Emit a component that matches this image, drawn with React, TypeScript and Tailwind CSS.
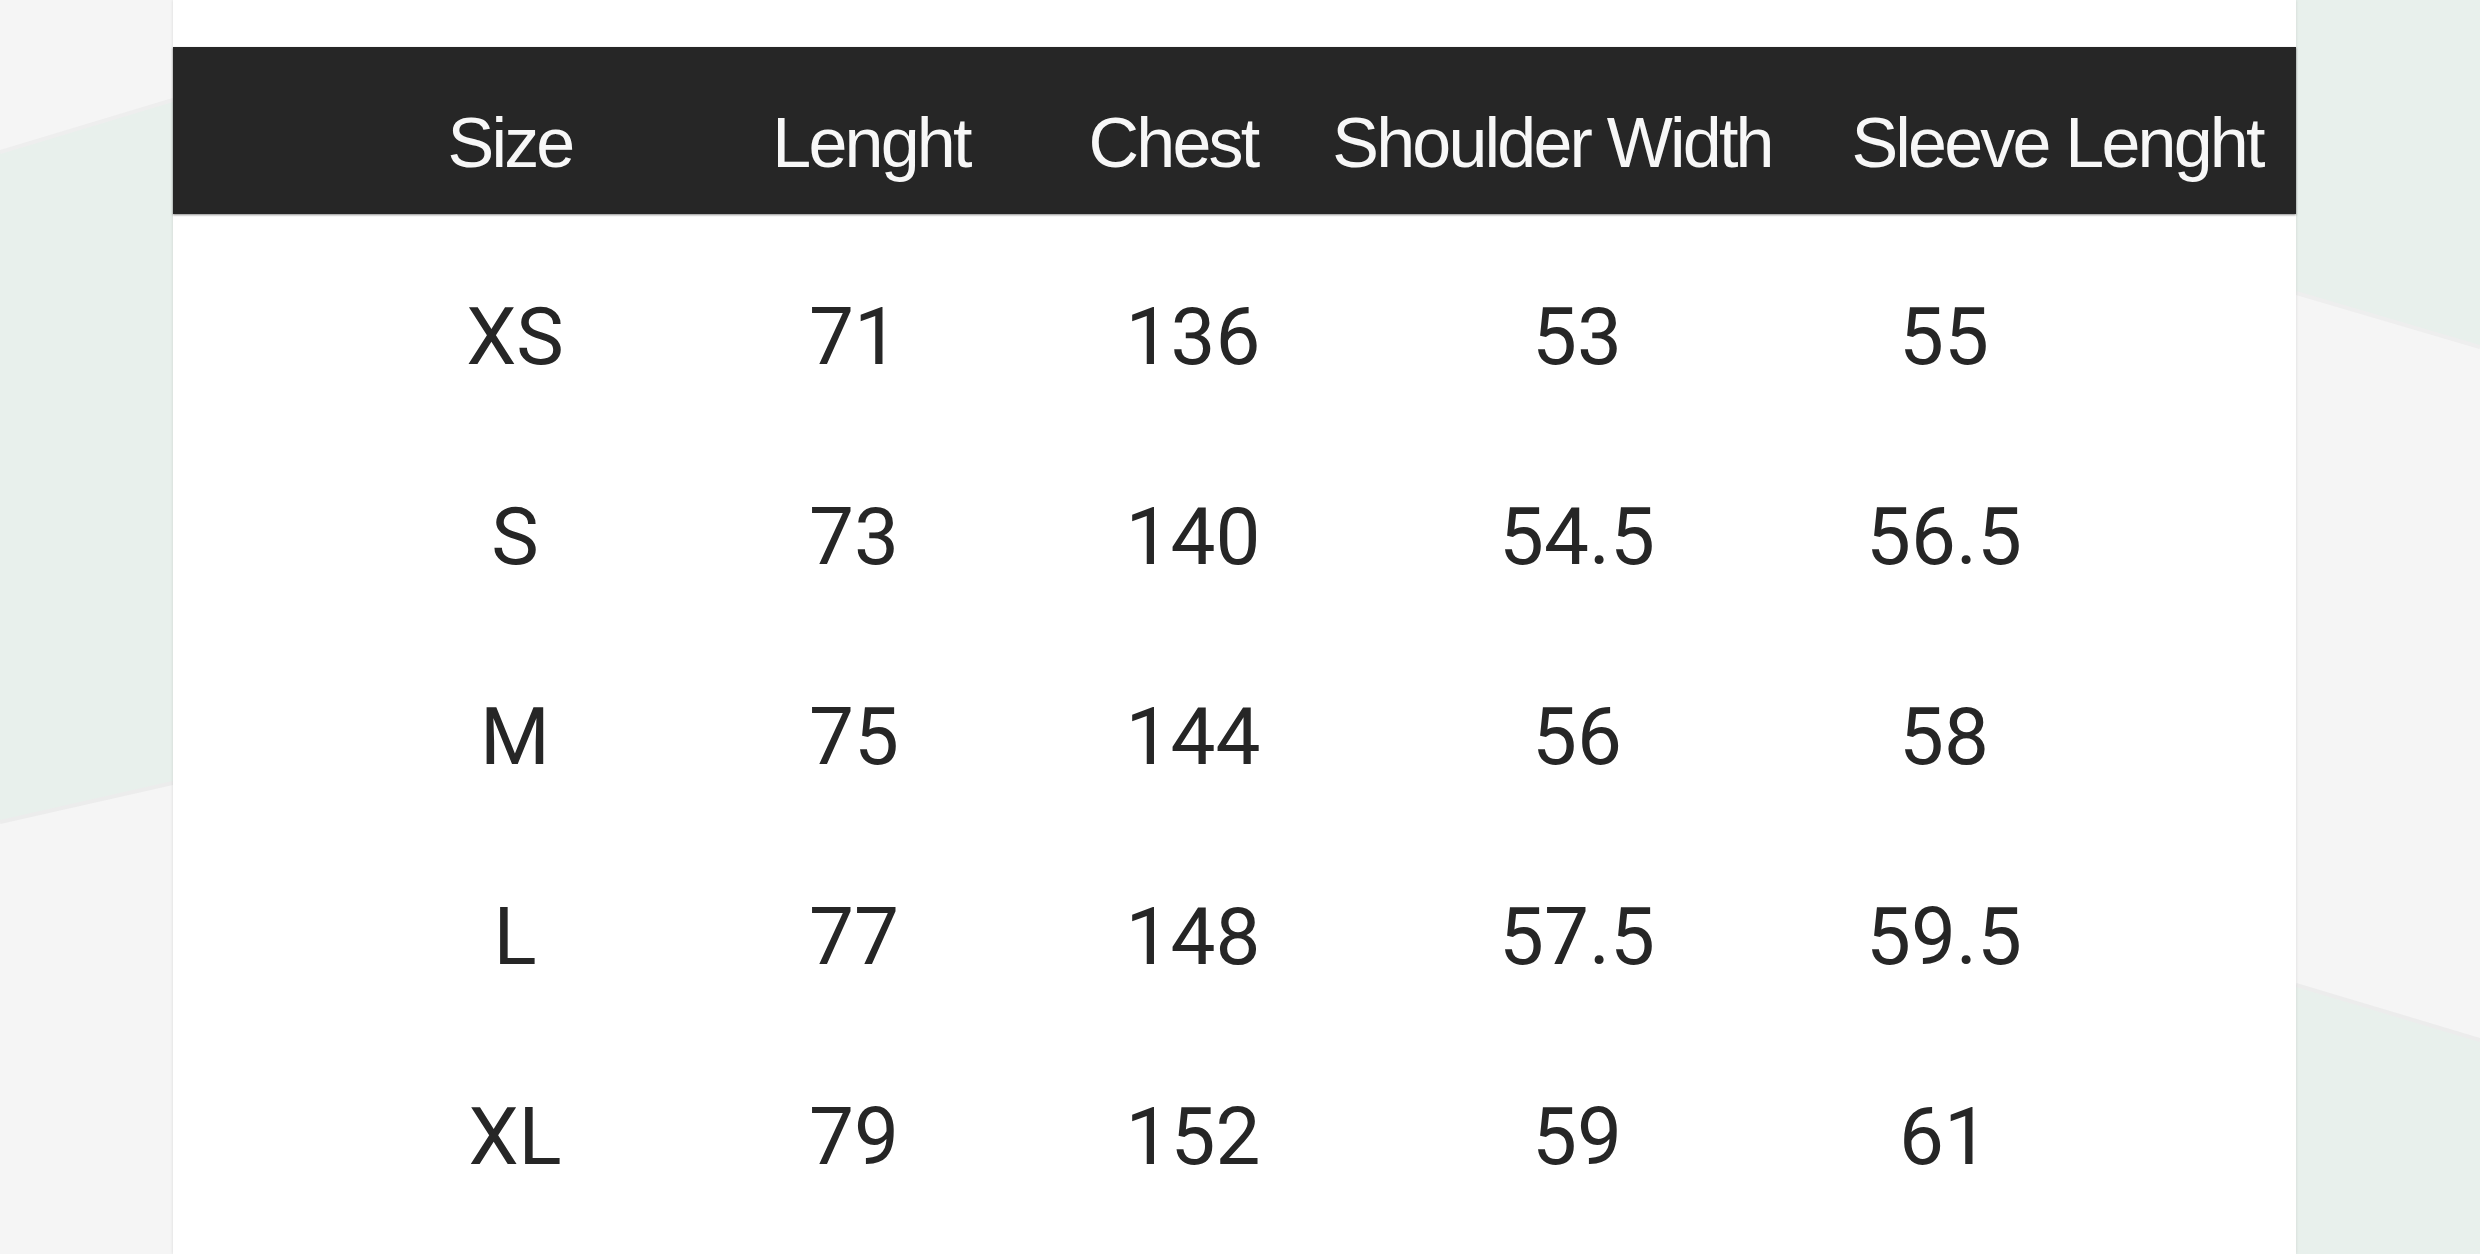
const headers = ["Size", "Lenght", "Chest", "Shoulder Width", "Sleeve Lenght"];

const rows = [
  ["XS", "71", "136", "53", "55"],
  ["S", "73", "140", "54.5", "56.5"],
  ["M", "75", "144", "56", "58"],
  ["L", "77", "148", "57.5", "59.5"],
  ["XL", "79", "152", "59", "61"],
];

const LeftStrip = () => (
  <div className="w-[173px] h-full shrink-0">
    <svg width="173" height="1254" viewBox="0 0 173 1254" preserveAspectRatio="none" className="block">
      <rect width="173" height="1254" fill="#f5f5f5" />
      <polygon points="0,152 173,100 173,783 0,822" fill="#e8f0ec" />
      <polyline points="0,152 173,100" stroke="#eeeeee" strokeWidth="4" fill="none" />
      <polyline points="0,822 173,783" stroke="#ececec" strokeWidth="4" fill="none" />
    </svg>
  </div>
);

const RightStrip = () => (
  <div className="w-[184px] h-full shrink-0">
    <svg width="184" height="1254" viewBox="0 0 184 1254" preserveAspectRatio="none" className="block">
      <rect width="184" height="1254" fill="#f5f5f5" />
      <polygon points="0,0 184,0 184,347 0,293" fill="#e8f0ec" />
      <polygon points="0,985 184,1040 184,1254 0,1254" fill="#e8f0ec" />
      <polyline points="0,293 184,347" stroke="#eeeeee" strokeWidth="4" fill="none" />
      <polyline points="0,985 184,1040" stroke="#ececec" strokeWidth="4" fill="none" />
    </svg>
  </div>
);

const App = () => {
  return (
    <div className="w-[2480px] h-[1254px] flex overflow-hidden bg-[#f5f5f5]">
      <LeftStrip />
      <div className="flex-1 h-full bg-white pt-[47px] shadow-[0_0_3px_rgba(0,0,0,0.12)] relative">
        <div className="h-[167px] bg-[#262626] shadow-[0_1px_2px_rgba(0,0,0,0.45)] grid grid-cols-[300px_422px_182px_576px_434px] pl-[187px] pt-[24px] items-center font-['Liberation_Sans',Arial,sans-serif] text-[70px] tracking-[-0.04em] text-[#f7f7f7] leading-none">
          {headers.map((h) => (
            <div key={h} className="text-center whitespace-nowrap">{h}</div>
          ))}
        </div>
        <div className="pt-[23px] font-['Roboto',sans-serif] text-[80px] text-[#262626] leading-none">
          {rows.map((r) => (
            <div key={r[0]} className="h-[200px] grid grid-cols-[300px_378px_300px_468px_266px] pl-[192px] items-center">
              {r.map((c, i) => (
                <div key={i} className="text-center whitespace-nowrap">{c}</div>
              ))}
            </div>
          ))}
        </div>
      </div>
      <RightStrip />
    </div>
  );
};

export default App;
